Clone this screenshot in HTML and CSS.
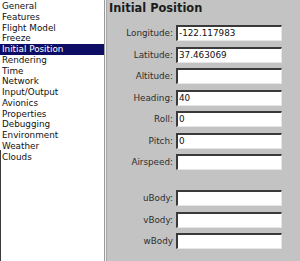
FILE: index.html
```html
<!DOCTYPE html>
<html>
<head>
<meta charset="utf-8">
<link rel="stylesheet" href="styles.css">
</head>
<body>
<div class="app">
  <ul class="nav">
    <li>General</li>
    <li>Features</li>
    <li>Flight Model</li>
    <li>Freeze</li>
    <li class="sel">Initial Position</li>
    <li>Rendering</li>
    <li>Time</li>
    <li>Network</li>
    <li>Input/Output</li>
    <li>Avionics</li>
    <li>Properties</li>
    <li>Debugging</li>
    <li>Environment</li>
    <li>Weather</li>
    <li>Clouds</li>
  </ul>
  <div class="splitter"></div>
  <div class="panel">
    <h1 class="title">Initial Position</h1>
    <div class="form">
      <label class="lbl">Longitude:</label><div class="field">-122.117983</div>
      <label class="lbl">Latitude:</label><div class="field">37.463069</div>
      <label class="lbl">Altitude:</label><div class="field"></div>
      <label class="lbl">Heading:</label><div class="field">40</div>
      <label class="lbl">Roll:</label><div class="field">0</div>
      <label class="lbl">Pitch:</label><div class="field">0</div>
      <label class="lbl">Airspeed:</label><div class="field"></div>
      <div class="spacer"></div>
      <label class="lbl">uBody:</label><div class="field"></div>
      <label class="lbl">vBody:</label><div class="field"></div>
      <label class="lbl">wBody</label><div class="field"></div>
    </div>
  </div>
</div>
</body>
</html>
```
FILE: styles.css
```css
html, body {
  margin: 0;
  padding: 0;
  width: 300px;
  height: 261px;
  overflow: hidden;
  background: #c3c3c3;
  font-family: "DejaVu Sans", sans-serif;
}
.app {
  display: flex;
  height: 261px;
}
.nav {
  list-style: none;
  margin: 0;
  padding: 1px 0 0 0;
  width: 104px;
  flex: none;
  background: linear-gradient(#3c3c3c, #3c3c3c) 0 150px / 1px 100% no-repeat, #fff;
  font-size: 8.8px;
  color: #111;
}
.nav li {
  height: 10.75px;
  line-height: 10.75px;
  padding-left: 2px;
  white-space: nowrap;
}
.nav li.sel {
  background: #0d0d66;
  color: #fff;
}
.splitter {
  width: 3px;
  flex: none;
  background: linear-gradient(to right, #9a9a9a 0 1px, #f2f2f2 1px 2px, #a8a8a8 2px 3px);
}
.panel {
  flex: 1;
  padding: 0 0 0 1px;
}
.title {
  margin: 0;
  padding: 2px 0 0 1px;
  font-size: 11.4px;
  font-weight: bold;
  line-height: 13px;
  color: #1c1c1c;
}
.form {
  display: grid;
  grid-template-columns: 65px 106px;
  column-gap: 3px;
  row-gap: 5.5px;
  margin-top: 10px;
}
.lbl {
  text-align: right;
  font-size: 8.8px;
  line-height: 16px;
  color: #2e2e2e;
  white-space: nowrap;
}
.field {
  box-sizing: border-box;
  height: 16px;
  background: #fff;
  border-top: 2px solid #3a3a3a;
  border-left: 2px solid #3a3a3a;
  border-bottom: 1px solid #e6e6e6;
  border-right: 1px solid #e6e6e6;
  font-size: 8.8px;
  line-height: 13px;
  padding-left: 1px;
  color: #111;
}
.spacer {
  grid-column: 1 / 3;
  height: 9px;
}
```
